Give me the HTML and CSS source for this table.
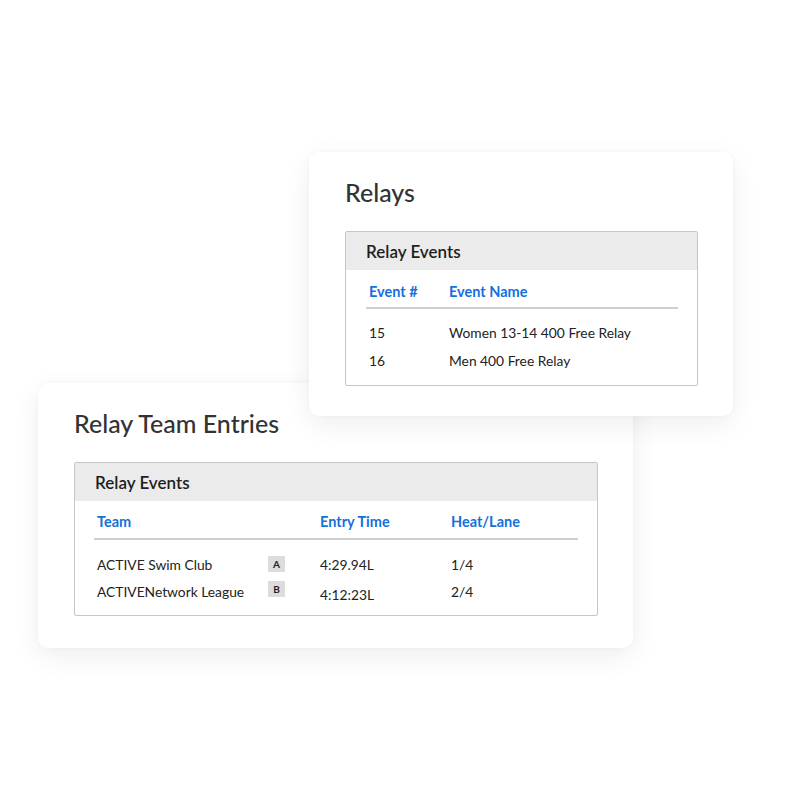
FILE: index.html
```html
<!DOCTYPE html>
<html>
<head>
<meta charset="utf-8">
<link rel="stylesheet" href="styles.css">
</head>
<body>
<div class="stage">
  <section class="card card-entries">
    <h1 class="card-title">Relay Team Entries</h1>
    <div class="panel">
      <div class="panel-head">Relay Events</div>
      <div class="panel-body">
        <div class="grid grid-entries cols">
          <span>Team</span><span></span><span>Entry Time</span><span>Heat/Lane</span>
        </div>
        <div class="grid grid-entries row first">
          <span>ACTIVE Swim Club</span><span class="badge">A</span><span>4:29.94L</span><span>1/4</span>
        </div>
        <div class="grid grid-entries row second">
          <span>ACTIVENetwork League</span><span class="badge">B</span><span class="low">4:12:23L</span><span>2/4</span>
        </div>
      </div>
    </div>
  </section>

  <section class="card card-relays">
    <h1 class="card-title">Relays</h1>
    <div class="panel">
      <div class="panel-head">Relay Events</div>
      <div class="panel-body">
        <div class="grid grid-relays cols">
          <span>Event #</span><span>Event Name</span>
        </div>
        <div class="grid grid-relays row first">
          <span>15</span><span>Women 13-14 400 Free Relay</span>
        </div>
        <div class="grid grid-relays row second">
          <span>16</span><span>Men 400 Free Relay</span>
        </div>
      </div>
    </div>
  </section>
</div>
</body>
</html>
```

FILE: styles.css
```css
* { box-sizing: border-box; }
html, body { margin: 0; padding: 0; background: #fff; }
body {
  font-family: "Lato", "Open Sans", sans-serif;
  color: #222;
}
.stage {
  position: relative;
  width: 800px;
  height: 800px;
  overflow: hidden;
}
.card {
  position: absolute;
  background: #fff;
  border-radius: 10px;
  box-shadow: 0 8px 28px rgba(0, 0, 0, 0.07), 0 0 4px rgba(0, 0, 0, 0.03);
  padding: 0 35px 0 36px;
}
.card-relays {
  left: 309px;
  top: 152px;
  width: 424px;
  height: 264px;
}
.card-entries {
  left: 38px;
  top: 383px;
  width: 595px;
  height: 265px;
}
.card-title {
  margin: 0;
  font-size: 25px;
  font-weight: 500;
  color: #333;
  line-height: 28px;
  padding-top: 26px;
  height: 79px;
}

.panel {
  border: 1px solid #c6c6c6;
  border-radius: 2px;
  overflow: hidden;
}
.panel-head {
  background: #ebebeb;
  height: 38px;
  line-height: 40px;
  padding-left: 20px;
  font-size: 17px;
  font-weight: 600;
  color: #1e1e1e;
}
.panel-body {
  padding: 0 19px 0 19px;
}
.card-relays .panel-body { padding-left: 20px; }
.grid {
  display: grid;
  align-items: center;
}
.grid-relays { grid-template-columns: 80px 1fr; }
.grid-entries { grid-template-columns: 171px 52px 131px 1fr; }
.grid span { padding-left: 3px; white-space: nowrap; }
.cols {
  height: 39px;
  padding-top: 5px;
  border-bottom: 2px solid #cfcfcf;
  color: #1470dc;
  font-weight: 700;
  font-size: 14.5px;
}
.grid-entries.cols { padding-top: 3px; }
.row {
  font-size: 13.8px;
  color: #222;
  height: 28px;
}
.row.first { margin-top: 9px; }
.row.second { margin-bottom: 11px; }
.grid-entries.row.first { margin-top: 10px; }
.grid-entries.row.second { margin-top: -1px; margin-bottom: 10px; }
.badge {
  justify-self: start;
  width: 17px;
  height: 16px;
  padding: 0 !important;
  background: #dcdcdc;
  font-size: 10px;
  font-weight: 700;
  text-align: center;
  line-height: 16px;
  margin-left: 3px;
}
.grid-entries.second .badge { margin-top: -4px; }
.low { margin-top: 6px; }
```
